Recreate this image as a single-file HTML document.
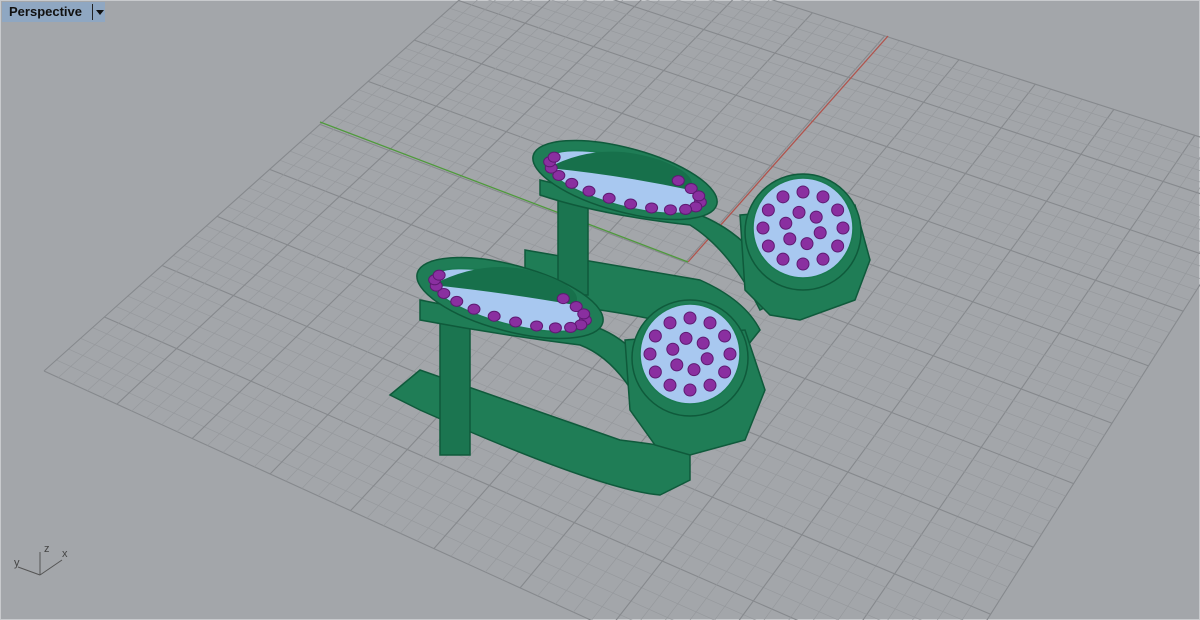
<!DOCTYPE html>
<html><head><meta charset="utf-8"><style>
html,body{margin:0;padding:0;width:1200px;height:620px;overflow:hidden;background:#a3a6aa}
#v{position:absolute;left:0;top:0;display:block}
#lab{position:absolute;left:2px;top:2px;height:20px;width:103px;background:#8fa7c2;font:bold 13px "Liberation Sans",sans-serif;color:#111;line-height:20px;padding-left:7px;box-sizing:border-box}
#lab span{position:absolute;left:90px;top:2px;width:1px;height:16px;background:#222}
#lab i{position:absolute;left:94px;top:8px;border-left:4px solid transparent;border-right:4px solid transparent;border-top:5px solid #111}
</style></head><body>
<svg id="v" width="1200" height="620" xmlns="http://www.w3.org/2000/svg">
<rect x="0.5" y="0.5" width="1199" height="619" fill="none" stroke="#c8cacd"/>
<g id="grid"></g>
<line x1="688" y1="262" x2="888" y2="36" stroke="#b0544d" stroke-width="1.3"/>
<line x1="688" y1="262" x2="320" y2="122" stroke="#4f9a3c" stroke-width="1.3"/>
<g stroke="#0f5a3b" stroke-width="1.5" fill="#1f7d56">
<path d="M525 250 L700 280 Q745 300 760 330 L740 355 Q700 320 560 305 L525 285 Z"/>
<rect x="558" y="195" width="30" height="100" fill="#1b7550"/>
<path d="M540 180 Q620 200 700 215 Q760 240 780 300 L760 310 Q730 250 690 225 Q600 215 540 195 Z"/>
<path d="M740 215 L855 205 L870 260 L855 300 L800 320 L770 315 L745 290 Z"/>
<ellipse cx="625" cy="180" rx="95" ry="32" transform="rotate(15 625 180)"/>
<ellipse cx="625" cy="182" rx="82" ry="24" transform="rotate(15 625 182)" fill="#a8c8f0" stroke="#1a7a50"/>
<circle cx="803" cy="232" r="58"/>
<circle cx="803" cy="228" r="50" fill="#a8c8f0" stroke="#1a7a50"/>
<path d="M390 395 L420 370 L620 440 Q660 445 690 450 L690 480 L660 495 Q600 490 420 410 Z"/>
<rect x="440" y="315" width="30" height="140" fill="#1b7550"/>
<path d="M420 300 Q520 320 590 325 Q640 340 665 400 L648 420 Q620 360 580 345 Q500 335 420 320 Z"/>
<path d="M625 340 L745 330 L765 390 L745 440 L690 455 L655 445 L630 410 Z"/>
<ellipse cx="510" cy="298" rx="96" ry="33" transform="rotate(15 510 298)"/>
<ellipse cx="510" cy="300" rx="82" ry="24" transform="rotate(15 510 300)" fill="#a8c8f0" stroke="#1a7a50"/>
<circle cx="690" cy="358" r="58"/>
<circle cx="690" cy="354" r="50" fill="#a8c8f0" stroke="#1a7a50"/>
</g>
<path d="M548 168 Q600 140 660 160 Q700 175 690 190 Q620 175 548 168Z" fill="#17704b"/>
<path d="M432 285 Q490 255 545 275 Q585 290 575 305 Q500 292 432 285Z" fill="#17704b"/>
<g id="dots" fill="#8a2fa0" stroke="#5e1a72" stroke-width="1"></g>
<g fill="none" stroke="#555" stroke-width="1">
<path d="M40 575 L40 552 M40 575 L18 567 M40 575 L62 560"/>
</g>
<g font-family="Liberation Sans,sans-serif" font-size="11" fill="#444">
<text x="14" y="566">y</text><text x="44" y="552">z</text><text x="62" y="557">x</text>
</g>
</svg>
<div id="lab">Perspective<span></span><i></i></div>
<script>
function solve(A,b){var n=b.length;for(var i=0;i<n;i++){var m=i;for(var r=i+1;r<n;r++)if(Math.abs(A[r][i])>Math.abs(A[m][i]))m=r;[A[i],A[m]]=[A[m],A[i]];[b[i],b[m]]=[b[m],b[i]];for(var r=0;r<n;r++)if(r!=i){var f=A[r][i]/A[i][i];for(var c=i;c<n;c++)A[r][c]-=f*A[i][c];b[r]-=f*b[i];}}return b.map((v,i)=>v/A[i][i]);}
var P=[[-1,1,44,371],[1,1,542,-74],[1,-1,1278,162],[-1,-1,898,760]],A=[],B=[];
P.forEach(p=>{var x=p[0],y=p[1],u=p[2],v=p[3];A.push([x,y,1,0,0,0,-u*x,-u*y]);B.push(u);A.push([0,0,0,x,y,1,-v*x,-v*y]);B.push(v);});
var h=solve(A,B);function T(x,y){var w=h[6]*x+h[7]*y+1;return[(h[0]*x+h[1]*y+h[2])/w,(h[3]*x+h[4]*y+h[5])/w];}
var g=document.getElementById('grid'),s='',N=25;
for(var i=-N;i<=N;i++){var t=i/N,maj=i%5==0;var c=maj?'#86898d':'#96999d',w=maj?1.1:0.7;
var a=T(t,-1),b=T(t,1);s+='<line x1="'+a[0]+'" y1="'+a[1]+'" x2="'+b[0]+'" y2="'+b[1]+'" stroke="'+c+'" stroke-width="'+w+'"/>';
a=T(-1,t);b=T(1,t);s+='<line x1="'+a[0]+'" y1="'+a[1]+'" x2="'+b[0]+'" y2="'+b[1]+'" stroke="'+c+'" stroke-width="'+w+'"/>';}
g.innerHTML=s;
var d='',ds=document.getElementById('dots');
function petal(cx,cy){for(var k=0;k<22;k++){var a=k/22*Math.PI*2;var x=cx+Math.cos(a)*78,y=cy+Math.sin(a)*20;var ro=15*Math.PI/180;var X=cx+(x-cx)*Math.cos(ro)-(y-cy)*Math.sin(ro),Y=cy+(x-cx)*Math.sin(ro)+(y-cy)*Math.cos(ro);if(Math.sin(a)<-0.3&&Math.cos(a)<0.5)continue;d+='<ellipse cx="'+X+'" cy="'+Y+'" rx="6" ry="5"/>';}}
function head(cx,cy){for(var k=0;k<12;k++){var a=k/12*Math.PI*2;d+='<ellipse cx="'+(cx+Math.cos(a)*40)+'" cy="'+(cy+Math.sin(a)*36)+'" rx="6" ry="6"/>';}for(var k=0;k<6;k++){var a=k/6*Math.PI*2+0.3;d+='<ellipse cx="'+(cx+Math.cos(a)*18)+'" cy="'+(cy+Math.sin(a)*16)+'" rx="6" ry="6"/>';}}
petal(625,182);petal(510,300);head(803,228);head(690,354);ds.innerHTML=d;
</script>
</body></html>
